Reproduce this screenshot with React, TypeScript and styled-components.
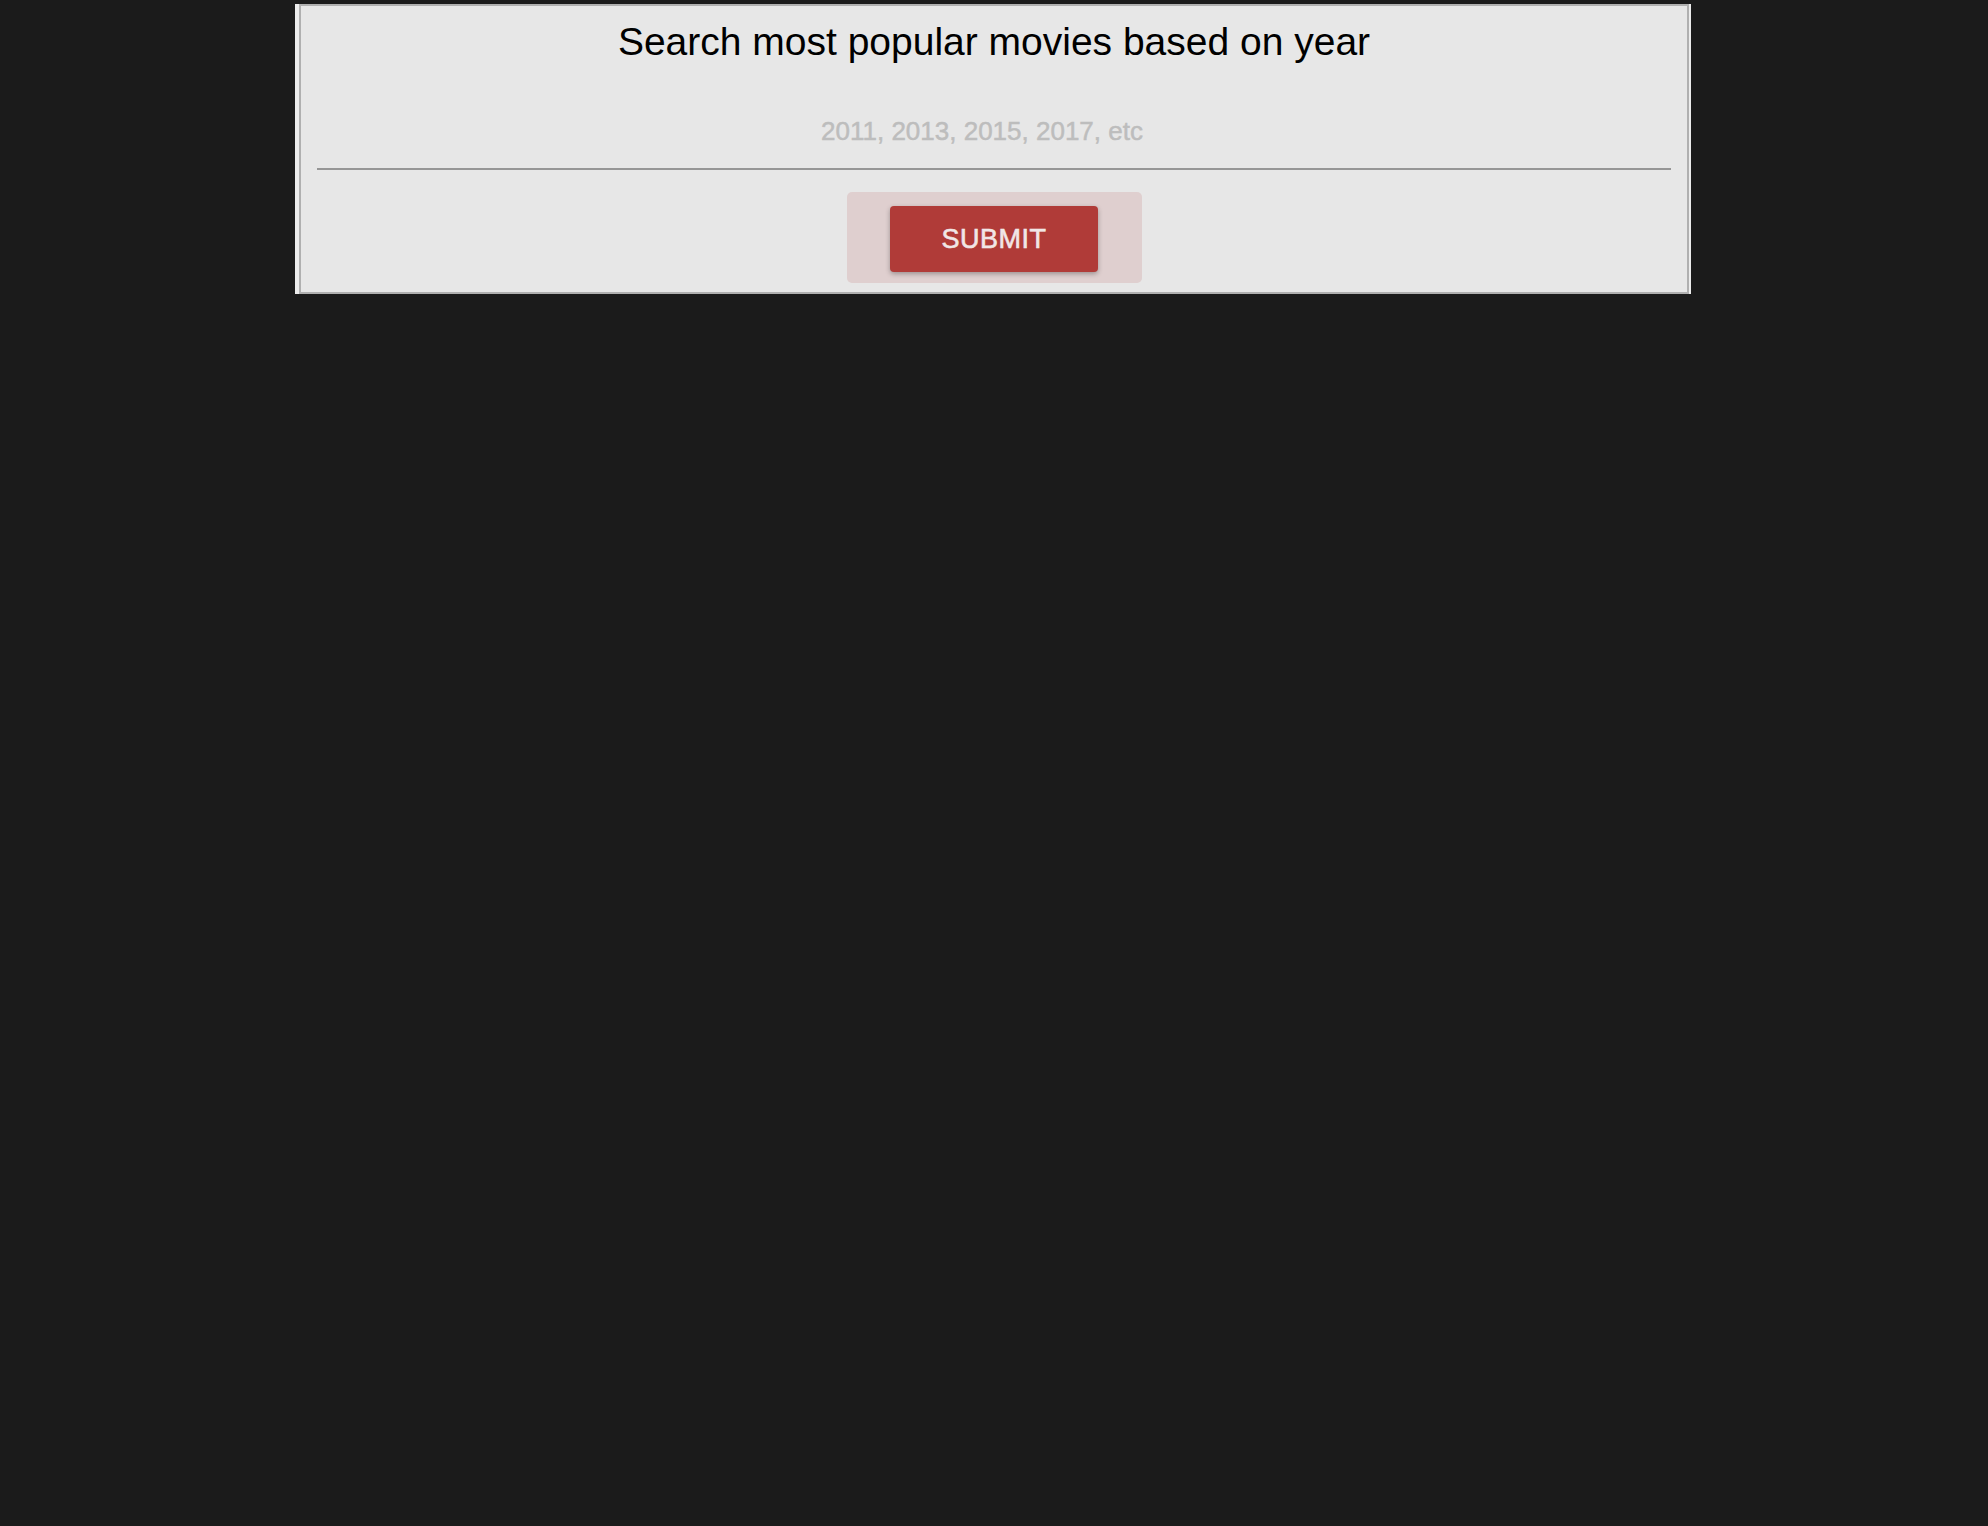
import React from 'react'
import styled, { createGlobalStyle } from 'styled-components'

const GlobalStyle = createGlobalStyle`
  html, body {
    margin: 0;
    padding: 0;
    background: #1b1b1b;
    font-family: "Liberation Sans", Arial, Helvetica, sans-serif;
  }
  #root {
    min-height: 1526px;
  }
`

const App: React.FC = () => {
  return (
    <>
      <GlobalStyle />
      <Panel onSubmit={(e) => e.preventDefault()}>
        <Title>Search most popular movies based on year</Title>
        <YearInput type='text' placeholder='2011, 2013, 2015, 2017, etc' />
        <ButtonWrap>
          <SubmitButton type='submit'>SUBMIT</SubmitButton>
        </ButtonWrap>
      </Panel>
    </>
  )
}

export default App

const Panel = styled.form`
  box-sizing: border-box;
  width: 1390px;
  margin: 4px auto 0 auto;
  padding: 0 16px 9px 16px;
  background: #e7e7e7;
  border: 2px solid #b0b0b0;
  box-shadow: -4px 0 0 #ececec, 2px 0 0 #ececec;
  display: flex;
  flex-direction: column;
  align-items: center;
`

const Title = styled.h1`
  margin: 0;
  padding-top: 13px;
  font-size: 39px;
  line-height: 46px;
  font-weight: normal;
  color: #000;
  text-align: center;
`

const YearInput = styled.input`
  box-sizing: border-box;
  width: 100%;
  height: 75px;
  margin-top: 30px;
  padding: 0 24px 0 0;
  border: none;
  border-bottom: 2px solid #969696;
  background: transparent;
  outline: none;
  text-align: center;
  font-family: "Liberation Sans", Arial, sans-serif;
  font-size: 26px;
  color: #333;

  &::placeholder {
    color: #bdbdbd;
    -webkit-text-stroke: 0.5px #bdbdbd;
  }
`

const ButtonWrap = styled.div`
  box-sizing: border-box;
  margin-top: 22px;
  width: 295px;
  height: 91px;
  padding: 14px 0 0 0;
  border-radius: 5px;
  background: #dfcfcf;
  display: flex;
  justify-content: center;
  align-items: flex-start;
`

const SubmitButton = styled.button`
  width: 208px;
  height: 66px;
  border: none;
  border-radius: 4px;
  background: #b03b38;
  color: #f1e6e6;
  font-family: "Liberation Sans", Arial, sans-serif;
  font-size: 27px;
  letter-spacing: 0.5px;
  -webkit-text-stroke: 0.6px #f1e6e6;
  cursor: pointer;
  box-shadow: 0 2px 5px rgba(0, 0, 0, 0.3);
`
